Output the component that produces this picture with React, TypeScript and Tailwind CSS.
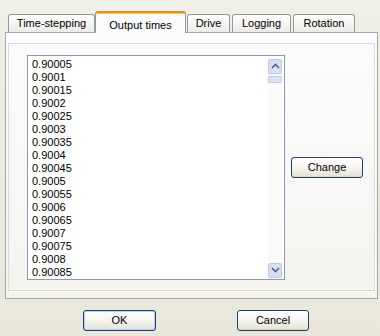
const times = [
  "0.90005", "0.9001", "0.90015", "0.9002", "0.90025", "0.9003", "0.90035", "0.9004",
  "0.90045", "0.9005", "0.90055", "0.9006", "0.90065", "0.9007", "0.90075", "0.9008", "0.90085",
];

function Tab({ label, w }: { label: string; w: string }) {
  return (
    <div
      className={`${w} mt-[3px] flex h-[18px] items-center justify-center rounded-t-[3px] border border-b-0 border-[#919b9c] bg-gradient-to-b from-white to-[#ecebe6] font-normal text-black`}
    >
      {label}
    </div>
  );
}

function ArrowUp() {
  return (
    <svg width="9" height="6" viewBox="0 0 9 6">
      <path d="M1 5 L4.5 1.5 L8 5" fill="none" stroke="#4d6185" strokeWidth="1.6" />
    </svg>
  );
}

function ArrowDown() {
  return (
    <svg width="9" height="6" viewBox="0 0 9 6">
      <path d="M1 1 L4.5 4.5 L8 1" fill="none" stroke="#4d6185" strokeWidth="1.6" />
    </svg>
  );
}

function XpButton({ label, w, isDefault }: { label: string; w: string; isDefault?: boolean }) {
  return (
    <button
      className={`${w} h-[21px] rounded-[3px] border border-[#1c3f75] bg-gradient-to-b from-white via-[#f5f4ef] to-[#e3e1d6] font-['Liberation_Sans',Arial,sans-serif] text-[11px] font-normal text-black ${
        isDefault ? "shadow-[inset_0_0_0_1px_#b9cdf5]" : "shadow-[inset_0_-1px_0_#e8d9a8]"
      }`}
    >
      {label}
    </button>
  );
}

export default function App() {
  return (
    <div className="flex h-[336px] w-[380px] flex-col bg-gradient-to-b from-[#f1f0e8] to-[#e8e7da] font-['Liberation_Sans',Arial,sans-serif] text-[11px] font-normal text-black">
      {/* tab strip */}
      <div className="mt-[11px] flex h-[21px] pl-[8px]">
        <Tab label="Time-stepping" w="w-[87px]" />
        <div className="relative z-10 -mb-[1px] flex h-[22px] w-[91px] justify-center rounded-t-[3px] border-x border-t-2 border-x-[#919b9c] border-t-[#e68b2c] bg-[#fcfcfe] pt-[4px] shadow-[inset_0_1px_0_#ffc73c]">
          Output times
        </div>
        <div className="ml-[1px]">
          <Tab label="Drive" w="w-[43px]" />
        </div>
        <div className="ml-[2px]">
          <Tab label="Logging" w="w-[59px]" />
        </div>
        <div className="ml-[2px]">
          <Tab label="Rotation" w="w-[62px]" />
        </div>
      </div>

      {/* tab page */}
      <div className="ml-[5px] h-[267px] w-[373px] border border-[#a0a8aa] bg-gradient-to-b from-[#fcfcfe] to-[#f4f3ee] px-[2px] pt-[10px]">
        <div className="flex h-[248px] items-center border border-[#dcdbd2] pl-[18px] shadow-[1px_1px_0_#ffffff]">
          {/* list box */}
          <div className="relative h-[225px] w-[258px] border border-[#8c9aac] bg-white pl-[4px] pt-[2px]">
            {times.map((t) => (
              <div key={t} className="h-[13px] leading-[13px]">
                {t}
              </div>
            ))}
            <div className="absolute right-[2px] top-[3px] flex h-[219px] w-[14px] flex-col bg-[#fafaf7]">
              <div className="flex h-[15px] items-center justify-center rounded-[2px] border border-[#bcc5ea] bg-[#d9def5]">
                <ArrowUp />
              </div>
              <div className="mt-[2px] h-[7px] rounded-[1px] border border-[#c6cdec] bg-[#dde1f4]" />
              <div className="flex-1" />
              <div className="flex h-[15px] items-center justify-center rounded-[2px] border border-[#bcc5ea] bg-[#d9def5]">
                <ArrowDown />
              </div>
            </div>
          </div>
          <div className="ml-[6px]">
            <XpButton label="Change" w="w-[72px]" />
          </div>
        </div>
      </div>

      {/* dialog buttons */}
      <div className="flex gap-[81px] pl-[83px] pt-[11px]">
        <XpButton label="OK" w="w-[73px]" isDefault />
        <XpButton label="Cancel" w="w-[72px]" />
      </div>
    </div>
  );
}
